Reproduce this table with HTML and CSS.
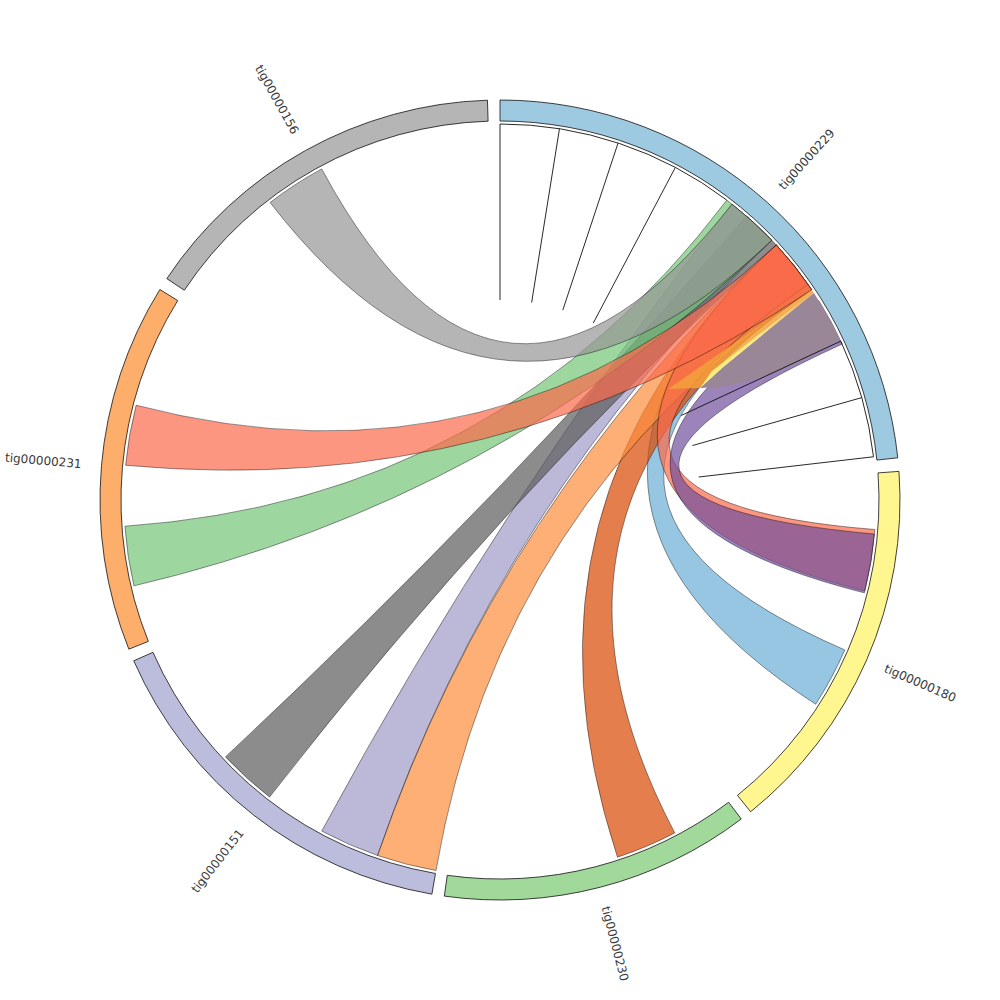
FILE: index.html
```html
<!DOCTYPE html>
<html>
<head>
<meta charset="utf-8">
<title>Chord diagram</title>
<link rel="stylesheet" href="styles.css">
</head>
<body>
<svg id="chart" class="chart" width="1000" height="1000" viewBox="0 0 1000 1000" xmlns="http://www.w3.org/2000/svg">
  <g id="chords"></g>
  <g id="extras">
    <path class="patch orangestripe" d="M 811.7 289.7 L 813.9 293 L 716 372 L 700 388 L 668 389 Z"/>
    <path class="patch mauve" d="M 813.9 293 A 376 376 0 0 1 840 339.3 Q 760 388.5 700 388 L 722 368 Z"/>
    <path class="patch yellowsliver" d="M 806 298 L 722 368 L 700 388 L 712 371 Z"/>
  </g>
  <g id="ticks"></g>
  <g id="ring"></g>
  <g id="labels"></g>
</svg>
<script src="script.js"></script>
</body>
</html>
```
FILE: styles.css
```css
html, body {
  margin: 0;
  padding: 0;
  background: #ffffff;
}
.chart {
  display: block;
}
.ring-seg {
  stroke: #111111;
  stroke-width: 0.8;
}
.chord {
  fill-opacity: 0.7;
  stroke: #000000;
  stroke-opacity: 0.6;
  stroke-width: 0.7;
}
.patch {
  stroke: none;
}
.mauve {
  fill: #998797;
}
.orangestripe {
  fill: #f5a03c;
  opacity: 0.85;
}
.yellowsliver {
  fill: #fcec7c;
}
.tick {
  fill: none;
  stroke: #111111;
  stroke-width: 0.9;
}
.label {
  font-family: "DejaVu Sans", Verdana, sans-serif;
  font-size: 12px;
  fill: #3a3a3a;
}
```
FILE: script.js
```js
(function () {
  var C = 500, R = 376, R0 = 379, R1 = 400, LR = 920;
  var NS = 'http://www.w3.org/2000/svg';
  function rad(a) { return a * Math.PI / 180; }
  function P(r, a) {
    return [(C + r * Math.sin(rad(a))).toFixed(2), (C - r * Math.cos(rad(a))).toFixed(2)];
  }
  function pt(p) { return p[0] + ' ' + p[1]; }
  function arc(r, a0, a1, sweep) {
    var large = Math.abs(a1 - a0) > 180 ? 1 : 0;
    return 'A ' + r + ' ' + r + ' 0 ' + large + ' ' + sweep + ' ' + pt(P(r, a1));
  }
  function ribbon(s0, s1, t0, t1) {
    return 'M ' + pt(P(R, s0)) + ' ' + arc(R, s0, s1, 1) +
      ' Q ' + C + ' ' + C + ' ' + pt(P(R, t0)) + ' ' + arc(R, t0, t1, 1) +
      ' Q ' + C + ' ' + C + ' ' + pt(P(R, s0)) + ' Z';
  }
  function sector(a0, a1) {
    return 'M ' + pt(P(R1, a0)) + ' ' + arc(R1, a0, a1, 1) +
      ' L ' + pt(P(R0, a1)) + ' ' + arc(R0, a1, a0, 0) + ' Z';
  }
  function el(tag, attrs, parent) {
    var e = document.createElementNS(NS, tag);
    for (var k in attrs) e.setAttribute(k, attrs[k]);
    parent.appendChild(e);
    return e;
  }

  var sectors = [
    { name: 'tig00000229', a0: 0, a1: 83.95, color: '#9ecae1' },
    { name: 'tig00000180', a0: 85.9, a1: 141.2, color: '#fff68f' },
    { name: 'tig00000230', a0: 142.9, a1: 188, color: '#a1d99b' },
    { name: 'tig00000151', a0: 189.8, a1: 246.3, color: '#bcbddc' },
    { name: 'tig00000231', a0: 248.1, a1: 301.75, color: '#fdae6b' },
    { name: 'tig00000156', a0: 303.6, a1: 358.2, color: '#b5b5b5' }
  ];

  var chords = [
    { s: [199, 208.3], t: [38.1, 46.3], color: '#9e9ac8' },
    { s: [217.8, 226.9], t: [41, 47.3], color: '#5b5b5b' },
    { s: [113.5, 122.9], t: [47.3, 56], color: '#6baed6' },
    { s: [152.3, 161.8], t: [47.3, 56], color: '#d94801' },
    { s: [189.8, 199], t: [47.3, 56], color: '#fd8d3c' },
    { s: [256.8, 266], t: [37.1, 46.3], color: '#74c476' },
    { s: [322.3, 331.7], t: [38.1, 46.3], color: '#969696' },
    { s: [94.5, 104], t: [47.3, 55], color: '#fb6a4a' },
    { s: [275.3, 284.6], t: [47.3, 56], color: '#fb6a4a' },
    { s: [95.2, 104.3], t: [58, 65.5], color: '#70509d' }
  ];

  var gChords = document.getElementById('chords');
  chords.forEach(function (c) {
    el('path', { 'class': 'chord', d: ribbon(c.s[0], c.s[1], c.t[0], c.t[1]), fill: c.color }, gChords);
  });

  var gTicks = document.getElementById('ticks');
  el('path', { 'class': 'tick', d: 'M ' + pt(P(R, 0)) + ' ' + arc(R, 0, 37.1, 1) }, gTicks);
  el('path', { 'class': 'tick', d: 'M ' + pt(P(R, 65)) + ' ' + arc(R, 65, 83.4, 1) }, gTicks);
  [0, 9.1, 18.3, 27.8, 65, 74.2, 83.4].forEach(function (a) {
    el('path', { 'class': 'tick', d: 'M ' + pt(P(200, a)) + ' L ' + pt(P(R, a)) }, gTicks);
  });

  var gRing = document.getElementById('ring');
  var gLabels = document.getElementById('labels');
  sectors.forEach(function (s) {
    el('path', { 'class': 'ring-seg', d: sector(s.a0, s.a1), fill: s.color }, gRing);
    var mid = (s.a0 + s.a1) / 2;
    var g = el('g', { transform: 'rotate(' + (mid - 90).toFixed(2) + ' 500 500)' }, gLabels);
    var attrs = { 'class': 'label', x: LR, y: 500, dy: '0.35em' };
    if (mid > 180) {
      attrs['text-anchor'] = 'end';
      attrs.transform = 'rotate(180 ' + LR + ' 500)';
    }
    var t = el('text', attrs, g);
    t.textContent = s.name;
  });
})();
```
